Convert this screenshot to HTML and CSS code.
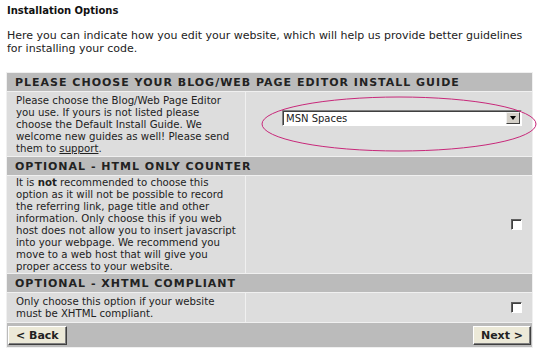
FILE: index.html
```html
<!DOCTYPE html>
<html lang="en">

<head>
    <meta charset="UTF-8">
    <title>Installation Options</title>
    <link rel="stylesheet" href="styles.css">
</head>

<body>
    <h1 class="page-title">Installation Options</h1>
    <p class="intro">Here you can indicate how you edit your website, which will help us provide better guidelines for installing your code.</p>

    <table class="options">
        <tr>
            <th colspan="2">PLEASE CHOOSE YOUR BLOG/WEB PAGE EDITOR INSTALL GUIDE</th>
        </tr>
        <tr class="editor-row">
            <td class="desc">Please choose the Blog/Web Page Editor you use. If yours is not listed please choose the Default Install Guide. We welcome new guides as well! Please send them to <a href="#">support</a>.</td>
            <td class="control">
                <div class="select-wrap">
                    <div class="select">
                        <span class="select-value">MSN Spaces</span>
                        <span class="select-arrow"></span>
                    </div>
                    <svg class="circle" width="278" height="58" viewBox="0 0 278 58">
                        <ellipse cx="139" cy="29" rx="137" ry="27" fill="none" stroke="#c8287a" stroke-width="1"/>
                    </svg>
                </div>
            </td>
        </tr>
        <tr>
            <th colspan="2">OPTIONAL - HTML ONLY COUNTER</th>
        </tr>
        <tr>
            <td class="desc">It is <b>not</b> recommended to choose this option as it will not be possible to record the referring link, page title and other information. Only choose this if you web host does not allow you to insert javascript into your webpage. We recommend you move to a web host that will give you proper access to your website.</td>
            <td class="control check"><span class="checkbox"></span></td>
        </tr>
        <tr>
            <th colspan="2">OPTIONAL - XHTML COMPLIANT</th>
        </tr>
        <tr class="xhtml-row">
            <td class="desc">Only choose this option if your website must be XHTML compliant.</td>
            <td class="control check"><span class="checkbox"></span></td>
        </tr>
        <tr class="nav-row">
            <td colspan="2">
                <div class="nav">
                    <button type="button">&lt; Back</button>
                    <button type="button">Next &gt;</button>
                </div>
            </td>
        </tr>
    </table>
</body>

</html>
```

FILE: styles.css
```css
* {
    box-sizing: border-box;
}

body {
    font-family: "DejaVu Sans", Verdana, sans-serif;
    margin: 0;
    padding: 5px 7px;
    background-color: white;
    color: #222;
}

.page-title {
    font-size: 10px;
    font-weight: bold;
    margin: 0 0 13px 0;
    color: #111;
}

.intro {
    font-size: 11px;
    line-height: 13px;
    margin: 0 0 17px 0;
    width: 532px;
}

.options {
    width: 527px;
    border-spacing: 1px;
    background-color: #f0f0f0;
    margin-left: -1px;
}

.options th {
    background-color: #bbbbbb;
    text-align: left;
    font-size: 11px;
    letter-spacing: 1px;
    height: 18px;
    padding: 1px 8px 0;
    color: #222;
}

.options td {
    background-color: #dddddd;
    font-size: 10.2px;
    line-height: 12px;
    vertical-align: middle;
}

.desc {
    width: 240px;
    padding: 1px 3px 0 9px;
}

.editor-row .desc {
    padding-right: 13px;
}

.xhtml-row td {
    height: 29px;
}

.desc a {
    color: #222;
}

.control {
    padding: 0 10px 0 14px;
}

.select-wrap {
    position: relative;
    height: 64px;
    display: flex;
    align-items: flex-start;
    padding: 18px 0 0 22px;
}

.select {
    display: flex;
    width: 240px;
    height: 16px;
    background: white;
    border: 1px solid;
    border-color: #808080 #fff #fff #808080;
    box-shadow: inset 1px 1px 0 #404040;
    font-size: 10px;
    align-items: center;
}

.select-value {
    flex: 1;
    padding-left: 3px;
    padding-top: 1px;
}

.select-arrow {
    width: 14px;
    height: 12px;
    margin-right: 1px;
    background: #d4d0c8;
    border: 1px solid;
    border-color: #f0f0f0 #404040 #404040 #f0f0f0;
    position: relative;
}

.select-arrow::after {
    content: "";
    position: absolute;
    left: 3px;
    top: 3px;
    border-left: 3px solid transparent;
    border-right: 3px solid transparent;
    border-top: 4px solid #000;
}

.circle {
    position: absolute;
    left: 0;
    top: 3px;
}

.check {
    text-align: right;
}

.checkbox {
    display: inline-block;
    width: 11px;
    height: 11px;
    background: white;
    border: 1px solid;
    border-color: #606060 #fff #fff #606060;
    box-shadow: inset 1px 1px 0 #404040;
    vertical-align: middle;
}

.nav-row td {
    background-color: #bbbbbb;
    padding: 3px 1px 2px;
}

.nav {
    display: flex;
    justify-content: space-between;
}

.nav button {
    font-family: "DejaVu Sans", Verdana, sans-serif;
    font-size: 11px;
    font-weight: bold;
    height: 19px;
    padding: 0 7px;
    background-color: #ece9d8;
    border: 1px solid;
    border-color: #fff #404040 #404040 #fff;
    box-shadow: inset -1px -1px 0 #808080;
    color: #222;
}
```
